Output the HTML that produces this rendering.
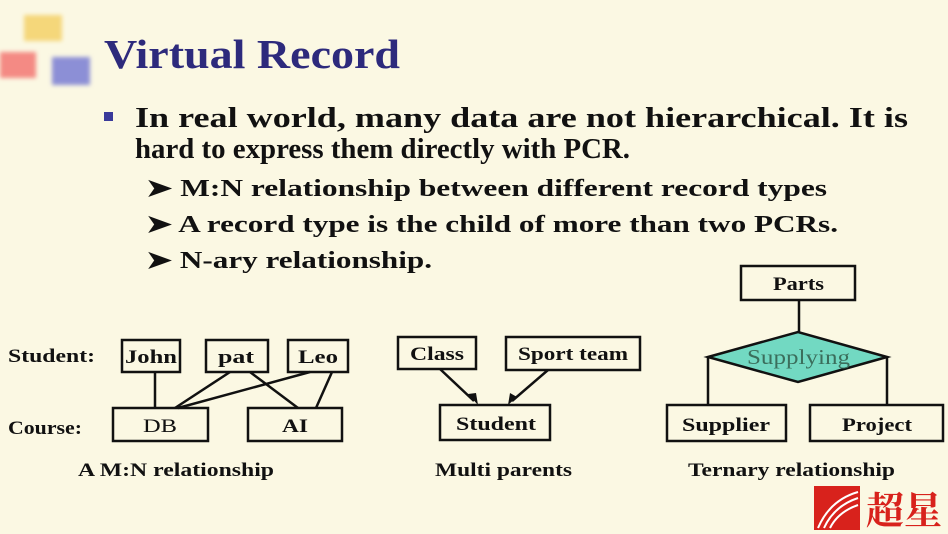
<!DOCTYPE html>
<html><head><meta charset="utf-8"><style>
html,body{margin:0;padding:0;background:#fbf8e3;}
svg{display:block}
</style></head><body>
<svg width="948" height="534" viewBox="0 0 948 534" xmlns="http://www.w3.org/2000/svg" font-family="'Liberation Serif',serif">
<rect width="948" height="534" fill="#fbf8e3"/>
<defs><filter id="b"><feGaussianBlur stdDeviation="2"/></filter></defs>
<g filter="url(#b)">
<rect x="24" y="15" width="38" height="26" fill="#f5d77a"/>
<rect x="0" y="52" width="36" height="26" fill="#f48a84"/>
<rect x="52" y="57" width="38" height="28" fill="#8c8fd6"/>
</g>
<g lengthAdjust="spacingAndGlyphs">
<text x="104" y="68" font-size="41" font-weight="bold" fill="#2d2a7c" textLength="296" lengthAdjust="spacingAndGlyphs">Virtual Record</text>
<rect x="104" y="112" width="9" height="9" fill="#3a3a9a"/>
<g font-weight="bold" fill="#111" font-size="28">
<text x="135" y="127" textLength="773" lengthAdjust="spacingAndGlyphs">In real world, many data are not hierarchical. It is</text>
<text x="135" y="158" textLength="495" lengthAdjust="spacingAndGlyphs">hard to express them directly with PCR.</text>
</g>
<g font-weight="bold" fill="#111" font-size="24">
<text x="146" y="196" textLength="681" lengthAdjust="spacingAndGlyphs">➤ M:N relationship between different record types</text>
<text x="146" y="232" textLength="692" lengthAdjust="spacingAndGlyphs">➤ A record type is the child of more than two PCRs.</text>
<text x="146" y="268" textLength="286" lengthAdjust="spacingAndGlyphs">➤ N-ary relationship.</text>
</g>
</g>
<g fill="none" stroke="#111" stroke-width="2.5">
<rect x="122" y="340" width="58" height="32"/>
<rect x="206" y="340" width="62" height="32"/>
<rect x="288" y="340" width="60" height="32"/>
<rect x="113" y="408" width="95" height="33"/>
<rect x="248" y="408" width="94" height="33"/>
<path d="M155 372V408M230 372L175 408M250 372L298 408M310 372L178 408M332 372L316 408"/>
<rect x="398" y="337" width="78" height="32"/>
<rect x="506" y="337" width="134" height="33"/>
<rect x="440" y="405" width="110" height="35"/>
<path d="M440 369L474 401M548 370L512 401"/>
<rect x="741" y="266" width="114" height="34"/>
<path d="M799 300V332M708 357V405M887 357V405"/>
<rect x="667" y="405" width="119" height="36"/>
<rect x="810" y="405" width="133" height="36"/>
</g>
<path d="M478 405L468 394L476 393ZM508 405L510 393L517 397Z" fill="#111"/>
<polygon points="708,357 798,332 887,357 798,382" fill="#72d9c2" stroke="#111" stroke-width="2.5"/>
<g font-size="19" fill="#111" font-weight="bold">
<text x="8" y="362" textLength="87" lengthAdjust="spacingAndGlyphs">Student:</text>
<text x="8" y="434" textLength="74" lengthAdjust="spacingAndGlyphs">Course:</text>
<text x="125" y="363" textLength="52" lengthAdjust="spacingAndGlyphs">John</text>
<text x="218" y="363" textLength="36" lengthAdjust="spacingAndGlyphs">pat</text>
<text x="298" y="363" textLength="40" lengthAdjust="spacingAndGlyphs">Leo</text>
<text x="143" y="432" font-weight="normal" textLength="34" lengthAdjust="spacingAndGlyphs">DB</text>
<text x="282" y="432" textLength="26" lengthAdjust="spacingAndGlyphs">AI</text>
<text x="410" y="360" textLength="54" lengthAdjust="spacingAndGlyphs">Class</text>
<text x="518" y="360" textLength="110" lengthAdjust="spacingAndGlyphs">Sport team</text>
<text x="456" y="430" textLength="80" lengthAdjust="spacingAndGlyphs">Student</text>
<text x="773" y="290" textLength="51" lengthAdjust="spacingAndGlyphs">Parts</text>
<text x="747" y="364" font-size="21" font-weight="normal" fill="#3b6e5c" textLength="103" lengthAdjust="spacingAndGlyphs">Supplying</text>
<text x="682" y="431" textLength="88" lengthAdjust="spacingAndGlyphs">Supplier</text>
<text x="842" y="431" textLength="70" lengthAdjust="spacingAndGlyphs">Project</text>
<text x="78" y="476" textLength="196" lengthAdjust="spacingAndGlyphs">A M:N relationship</text>
<text x="435" y="476" textLength="137" lengthAdjust="spacingAndGlyphs">Multi parents</text>
<text x="688" y="476" textLength="207" lengthAdjust="spacingAndGlyphs">Ternary relationship</text>
</g>
<rect x="814" y="486" width="46" height="44" fill="#d8221c"/>
<path d="M818 528Q830 500 858 492M824 528Q834 506 858 498M830 528Q838 512 858 505" stroke="#fff" stroke-width="2" fill="none"/>
<text x="866" y="524" font-size="38" font-family="'Noto Serif CJK SC',serif" font-weight="bold" fill="#d8221c">超星</text>
</svg>
</body></html>
